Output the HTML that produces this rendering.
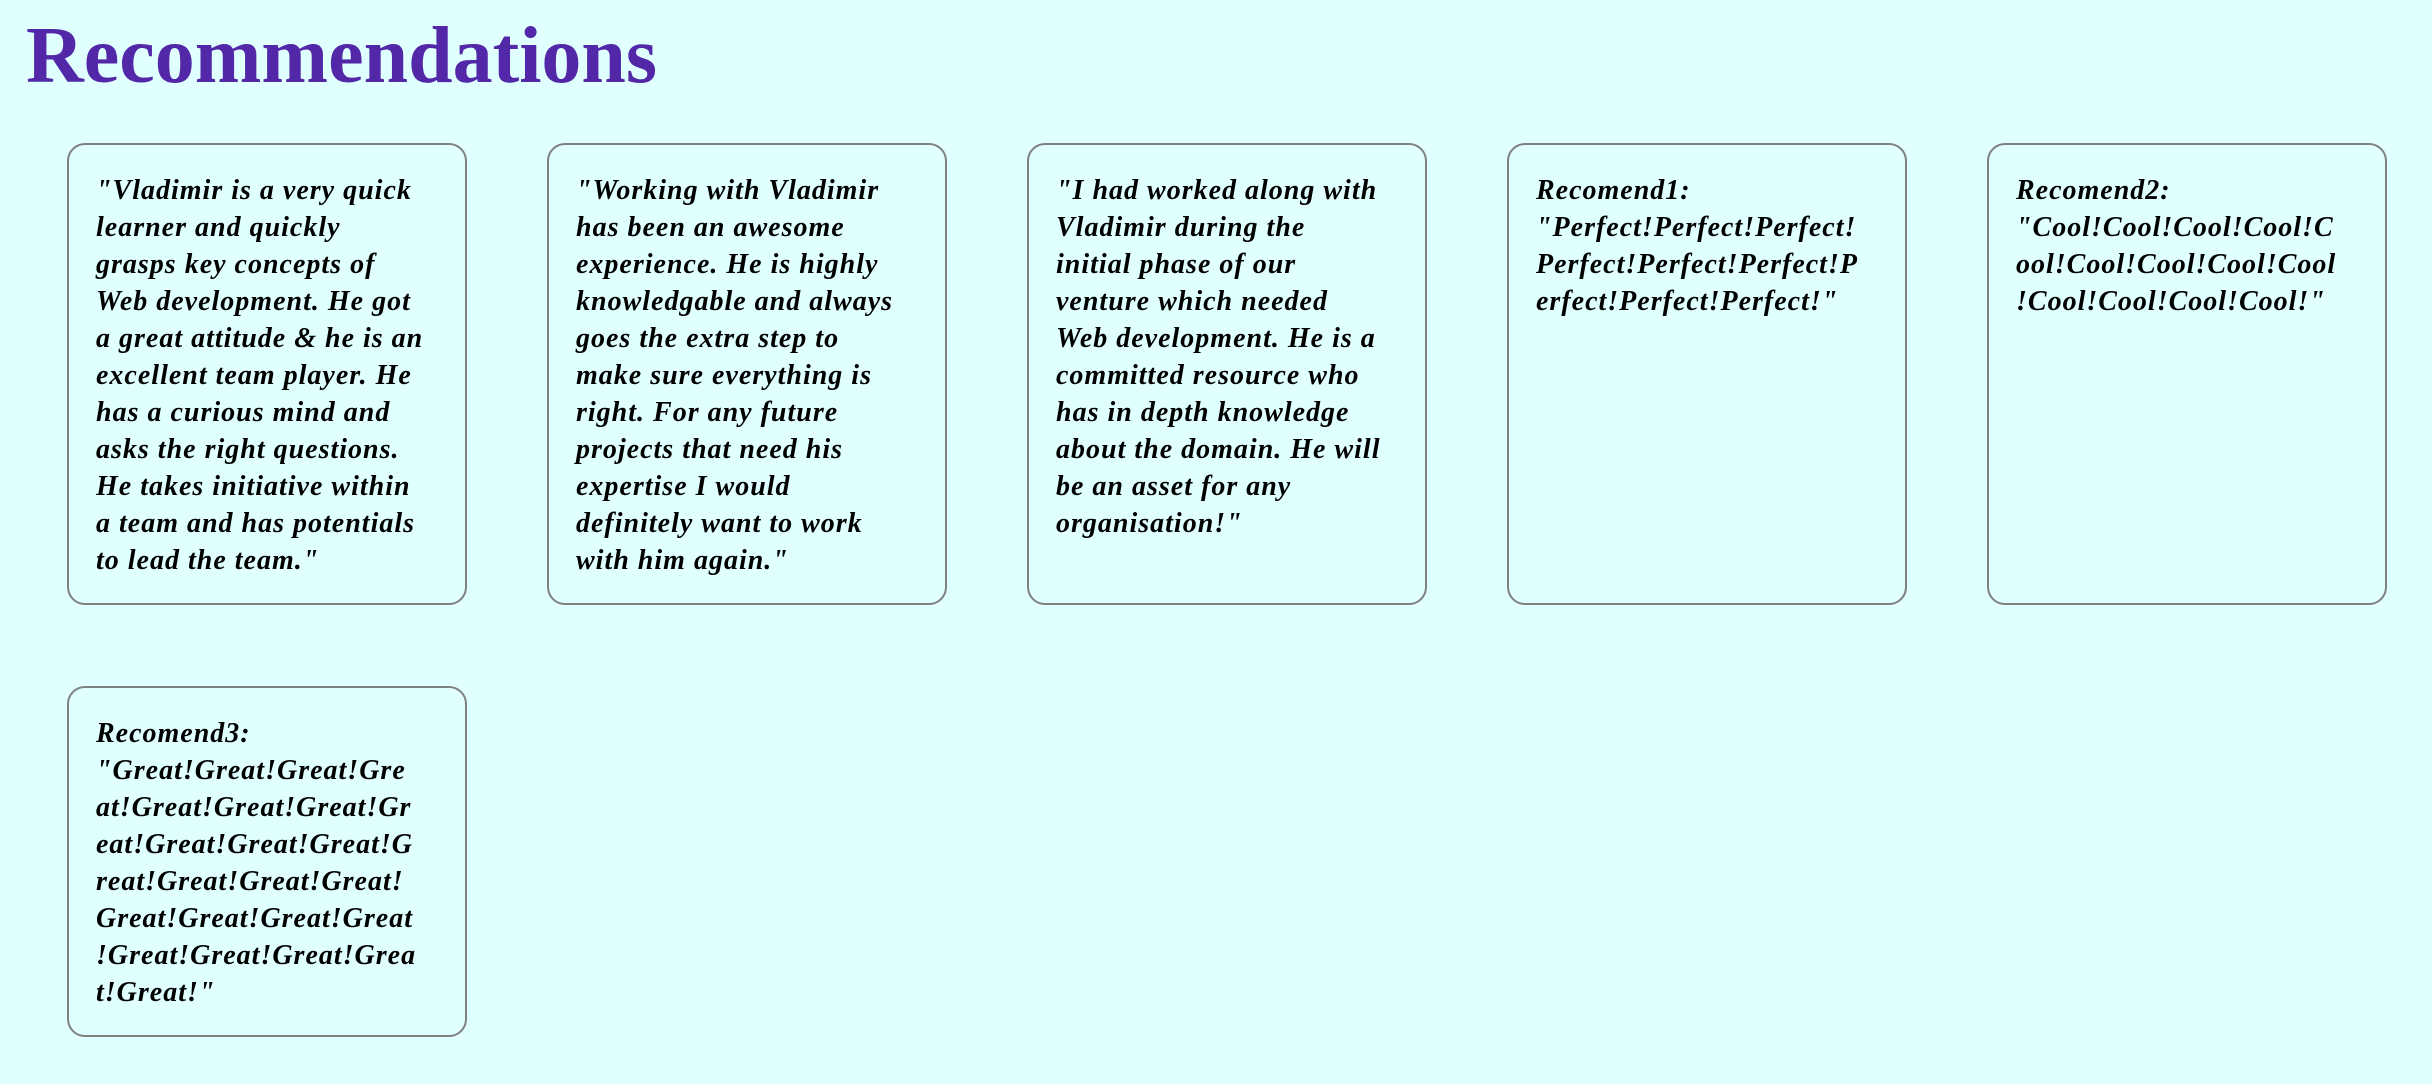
<!DOCTYPE html>
<html><head><meta charset="utf-8"><style>
body{margin:0;background:#e0ffff;font-family:"Liberation Serif",serif;width:2432px;height:1084px;overflow:hidden;}
h1{margin:0;position:absolute;left:26px;top:8px;font-size:80px;color:#5227a8;font-weight:bold;line-height:96px;}
.card{position:absolute;width:396px;height:458px;border:2px solid #808080;border-radius:18px;box-sizing:content-box;}
.card p{margin:0;position:absolute;left:27px;top:27px;font-size:28px;line-height:37px;font-weight:bold;font-style:italic;color:#000;white-space:nowrap;letter-spacing:1px;}
</style></head><body>
<h1>Recommendations</h1>
<div class="card" style="left:67px;top:143px"><p>"Vladimir is a very quick<br>learner and quickly<br>grasps key concepts of<br>Web development. He got<br>a great attitude &amp; he is an<br>excellent team player. He<br>has a curious mind and<br>asks the right questions.<br>He takes initiative within<br>a team and has potentials<br>to lead the team."</p></div>
<div class="card" style="left:547px;top:143px"><p>"Working with Vladimir<br>has been an awesome<br>experience. He is highly<br>knowledgable and always<br>goes the extra step to<br>make sure everything is<br>right. For any future<br>projects that need his<br>expertise I would<br>definitely want to work<br>with him again."</p></div>
<div class="card" style="left:1027px;top:143px"><p>"I had worked along with<br>Vladimir during the<br>initial phase of our<br>venture which needed<br>Web development. He is a<br>committed resource who<br>has in depth knowledge<br>about the domain. He will<br>be an asset for any<br>organisation!"</p></div>
<div class="card" style="left:1507px;top:143px"><p>Recomend1:<br>"Perfect!Perfect!Perfect!<br>Perfect!Perfect!Perfect!P<br>erfect!Perfect!Perfect!"</p></div>
<div class="card" style="left:1987px;top:143px"><p>Recomend2:<br>"Cool!Cool!Cool!Cool!C<br>ool!Cool!Cool!Cool!Cool<br>!Cool!Cool!Cool!Cool!"</p></div>
<div class="card" style="left:67px;top:686px;height:347px"><p>Recomend3:<br>"Great!Great!Great!Gre<br>at!Great!Great!Great!Gr<br>eat!Great!Great!Great!G<br>reat!Great!Great!Great!<br>Great!Great!Great!Great<br>!Great!Great!Great!Grea<br>t!Great!"</p></div>
</body></html>
